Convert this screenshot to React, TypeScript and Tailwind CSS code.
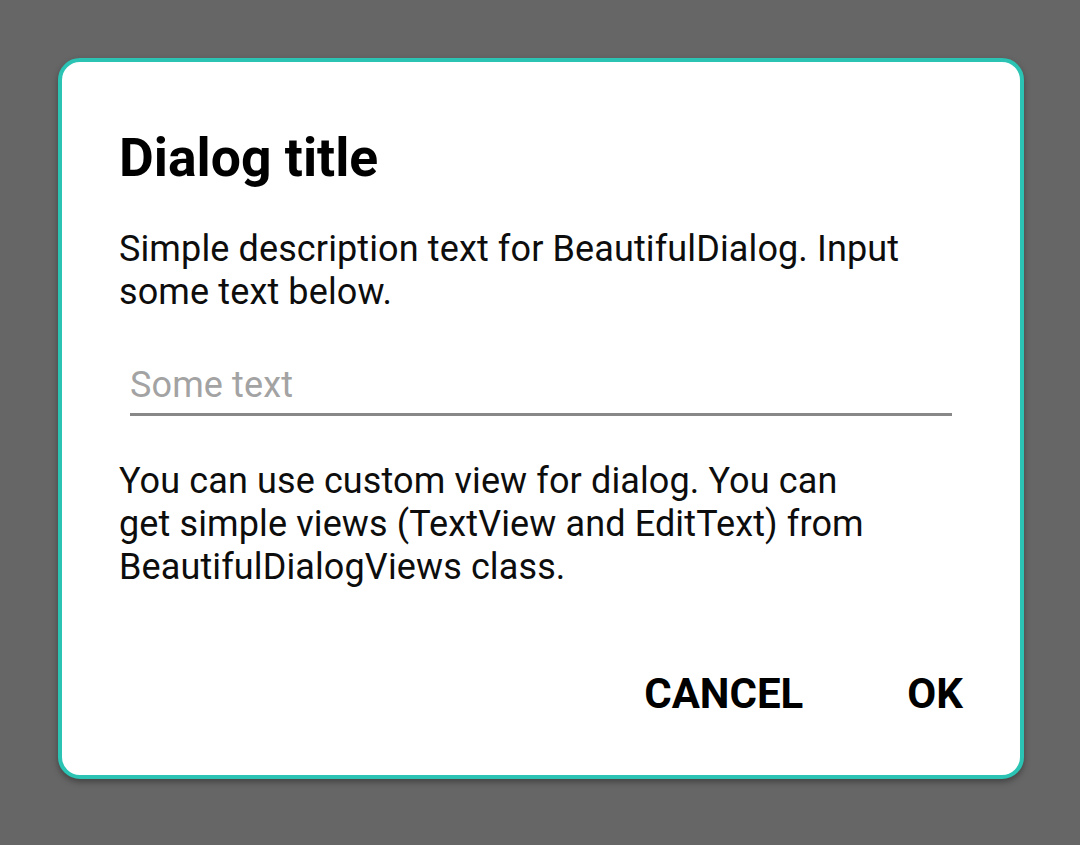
export default function App() {
  return (
    <div className="w-[1080px] h-[845px] bg-[#666666] pt-[58px] pl-[58px] font-['Roboto','Liberation_Sans',sans-serif]">
      <div className="w-[966px] h-[721px] rounded-[22px] border-[4px] border-[#2bc4b4] bg-white shadow-[0_3px_6px_rgba(0,0,0,0.35)] pt-[64px] px-[57px]">
        <h2 className="text-[53.5px] leading-[64px] font-bold text-black">Dialog title</h2>

        <p className="mt-[38px] text-[36px] leading-[43px] tracking-[0.12px] text-[#0d0d0d]">
          Simple description text for BeautifulDialog. Input some text below.
        </p>

        <div className="mt-[50px] mx-[11px] pb-[6px] border-b-[3px] border-[#888888]">
          <input
            className="w-full text-[36px] leading-[43px] h-[43px] tracking-[0.12px] outline-none placeholder:text-[#a3a3a3] bg-transparent"
            placeholder="Some text"
          />
        </div>

        <p className="mt-[44px] text-[36px] leading-[43px] tracking-[0.12px] text-[#0d0d0d]">
          You can use custom view for dialog. You can
          <br />
          get simple views (TextView and EditText) from
          <br />
          BeautifulDialogViews class.
        </p>

        <div className="mt-[80px] flex justify-end gap-[104px]">
          <button className="text-[42px] leading-[50px] font-bold text-black">CANCEL</button>
          <button className="text-[42px] leading-[50px] font-bold text-black">OK</button>
        </div>
      </div>
    </div>
  )
}
